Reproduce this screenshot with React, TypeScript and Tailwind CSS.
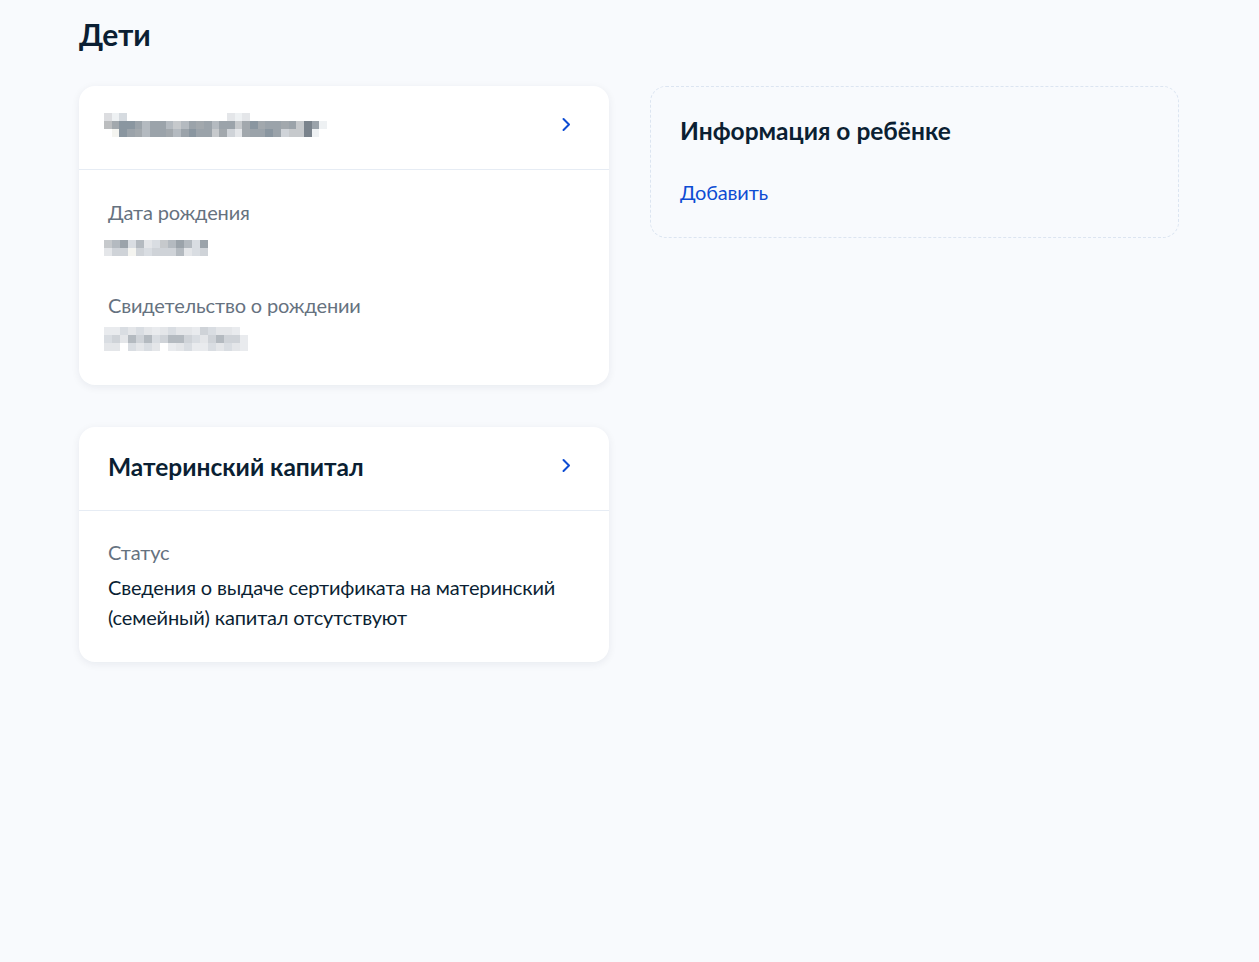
import React from "react";

const PAL: Record<string, string> = {
  a: "bg-[#dcdde0]",
  b: "bg-[#eef1f3]",
  c: "bg-[#d6dbe0]",
  d: "bg-[#bbbdbf]",
  e: "bg-[#a2a8ad]",
  f: "bg-[#8a96a0]",
  g: "bg-[#9ba3aa]",
  h: "bg-[#b4bac0]",
  i: "bg-[#c6c9cc]",
  j: "bg-[#7a838c]",
  k: "bg-[#f4f4f0]",
  l: "bg-[#e4e6e9]",
  m: "bg-[#cfd3d8]",
  n: "bg-[#d9dde2]",
  o: "bg-[#e9ebee]",
  ".": "bg-transparent",
};

function Pixels({ rows, cell }: { rows: string[]; cell: string }) {
  return (
    <div className="flex flex-col">
      {rows.map((r, i) => (
        <div key={i} className="flex">
          {r.split("").map((ch, j) => (
            <div key={j} className={`${cell} ${PAL[ch] ?? "bg-transparent"}`} />
          ))}
        </div>
      ))}
    </div>
  );
}

function Chevron() {
  return (
    <svg width="10" height="16" viewBox="0 0 10 16" fill="none" className="mt-[31px] shrink-0">
      <path d="M2.5 2 L8 7.5 L2.5 13" stroke="#0d4cd3" strokeWidth="2" strokeLinecap="round" strokeLinejoin="round" />
    </svg>
  );
}

export default function App() {
  return (
    <div className="min-h-[962px] w-full bg-[#f8fafd] font-['Lato','Noto_Sans',sans-serif] text-[#0b1f33]">
      <div className="ml-[79px] w-[1100px] pt-[16px]">
        <h1 className="text-[30px] font-bold leading-[36px] tracking-[-0.2px]">Дети</h1>
        <div className="mt-[34px] grid grid-cols-[530px_529px] gap-[41px] items-start">
          <div className="flex flex-col gap-[42px]">
            <div className="rounded-2xl bg-white shadow-[0_2px_8px_rgba(11,31,51,0.07)]">
              <div className="flex h-[84px] items-start justify-between border-b border-[#e6ecf4] pl-[25px] pr-[38px]">
                <div className="mt-[27px]">
                  <Pixels
                    cell="w-[7.7px] h-[8px]"
                    rows={[
                      "abc.............lbl..........",
                      "deffghgghihgeghggiefeggegijgb",
                      ".kfgehggehgfggiemleggfgmiijb.",
                    ]}
                  />
                </div>
                <Chevron />
              </div>
              <div className="pl-[29px] pr-7 pt-[30px] pb-[34px]">
                <div className="text-[20px] leading-6 tracking-[-0.15px] text-[#66727f]">Дата рождения</div>
                <div className="mt-[16px] -ml-[4px]">
                  <Pixels cell="w-[8px] h-[8px]" rows={["ihgnhlnihghng", "lmmkmnmmmhlnm"]} />
                </div>
                <div className="mt-[37px] text-[20px] leading-6 tracking-[-0.15px] text-[#66727f]">
                  Свидетельство о рождении
                </div>
                <div className="mt-[10px] -ml-[4px]">
                  <Pixels
                    cell="w-[8px] h-[8px]"
                    rows={["oonlnlolnllomnllo.", "nmlhmhnmhhmnlmhmmo", "ll.nlnl.olnoonlnlo"]}
                  />
                </div>
              </div>
            </div>

            <div className="rounded-2xl bg-white shadow-[0_2px_8px_rgba(11,31,51,0.07)]">
              <div className="flex h-[84px] items-start justify-between border-b border-[#e6ecf4] pl-[29px] pr-[38px]">
                <div className="mt-[26px] text-[24.5px] font-bold leading-7">Материнский капитал</div>
                <Chevron />
              </div>
              <div className="pl-[29px] pr-7 pt-[29px] pb-[30px]">
                <div className="text-[20px] leading-6 tracking-[-0.15px] text-[#66727f]">Статус</div>
                <div className="mt-[8px] text-[20px] leading-[30px] tracking-[-0.15px]">
                  Сведения о выдаче сертификата на материнский (семейный) капитал отсутствуют
                </div>
              </div>
            </div>
          </div>

          <div className="rounded-2xl border border-dashed border-[#dce5f1] px-[29px] pt-[28px] pb-[33px]">
            <div className="text-[24.5px] font-bold leading-8">Информация о ребёнке</div>
            <div className="mt-[33px] text-[20px] leading-6 tracking-[-0.15px] text-[#0d4cd3]">Добавить</div>
          </div>
        </div>
      </div>
    </div>
  );
}
